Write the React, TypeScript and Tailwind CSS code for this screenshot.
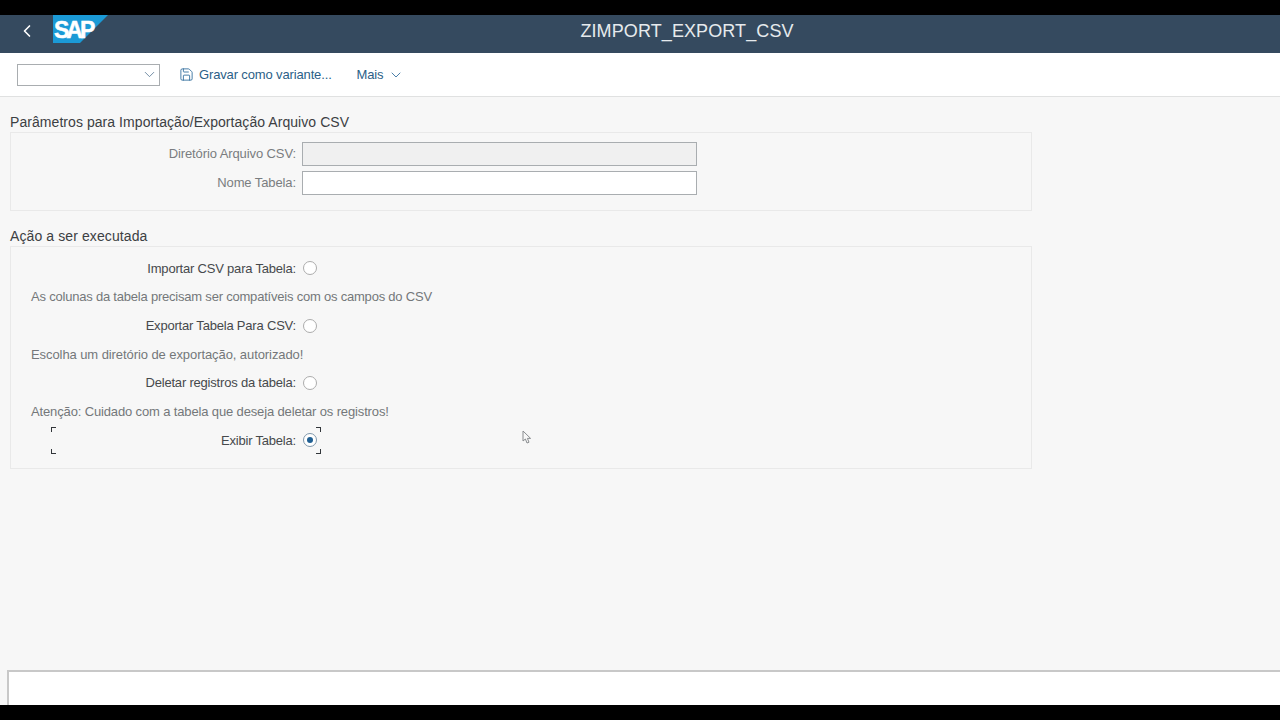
import React from 'react';
import { ChevronDown, ChevronLeft, Save } from 'lucide-react';

const font = { fontFamily: '"Liberation Sans", Arial, sans-serif' };

const RadioRow: React.FC<{ label: string; checked?: boolean }> = ({ label, checked }) => (
    <div className="flex items-center h-[28.67px]">
        <span className="w-[285px] text-right text-[13px] text-[#46494c] tracking-[-0.2px]">{label}</span>
        <span className={`ml-[7px] w-[14px] h-[14px] rounded-full border bg-white flex items-center justify-center ${checked ? 'border-[#7f97ab]' : 'border-[#acacac]'}`}>
            {checked && <span className="w-[6px] h-[6px] rounded-full bg-[#1f5f93]"></span>}
        </span>
    </div>
);

const Hint: React.FC<{ text: string; className: string }> = ({ text, className }) => (
    <div className={`h-[28.67px] flex items-center pl-[20px] text-[13px] text-[#74777a] ${className}`}>{text}</div>
);

const FieldRow: React.FC<{ label: string; disabled?: boolean }> = ({ label, disabled }) => (
    <div className="flex items-center h-[24px]">
        <span className="w-[285px] text-right text-[13px] text-[#7a7d80] tracking-[-0.1px]">{label}</span>
        <div className={`ml-[6px] w-[395px] h-[24px] border border-[#a9adb0] ${disabled ? 'bg-[#f0f0f0]' : 'bg-white'}`}></div>
    </div>
);

const App: React.FC = () => {
    return (
        <div className="w-[1280px] h-[720px] flex flex-col overflow-hidden bg-black relative" style={font}>
            <div className="h-[15px] bg-black shrink-0"></div>

            <header className="h-[38px] shrink-0 bg-[#354a5f] flex items-center pb-[7px]">
                <div className="w-[53px] flex items-center pl-[17px]">
                    <ChevronLeft size={20} strokeWidth={2} className="text-white" />
                </div>
                <div className="relative w-[55px] h-[28px] self-start">
                    <svg width="55" height="28" viewBox="0 0 55 28" className="block">
                        <polygon points="0,0 55,0 27,28 0,28" fill="#1b9ad6" />
                    </svg>
                    <span className="absolute left-[1px] top-[2px] text-[23px] leading-[26px] font-bold text-white tracking-[-3px] [-webkit-text-stroke:0.5px_white]">SAP</span>
                </div>
                <div className="flex-1 text-center pr-[14px] text-[18px] text-[#e6eaed] tracking-[0.1px] pt-[1px]">ZIMPORT_EXPORT_CSV</div>
            </header>

            <div className="h-[44px] shrink-0 bg-white border-b border-[#e0e1e1] flex items-center pl-[17px]">
                <div className="w-[143px] h-[22px] border border-[#a9adb0] bg-white flex items-center justify-end pr-[1px]">
                    <ChevronDown size={17} strokeWidth={1.1} className="text-[#4d6f8c]" />
                </div>
                <Save size={15} strokeWidth={1.4} className="ml-[19px] text-[#2f6c9c]" />
                <span className="ml-[5px] text-[13px] text-[#2b5f88] tracking-[-0.14px]">Gravar como variante...</span>
                <span className="ml-[25px] text-[13px] text-[#2b5f88] tracking-[-0.2px]">Mais</span>
                <ChevronDown size={16} strokeWidth={1.3} className="ml-[5px] text-[#2f6c9c]" />
            </div>

            <main className="flex-1 bg-[#f7f7f7] pl-[10px] pt-[15px] relative">
                <h2 className="h-[20px] text-[14px] leading-[21px] text-[#3c4043] tracking-[0.06px]">Parâmetros para Importação/Exportação Arquivo CSV</h2>
                <section className="w-[1022px] h-[79px] border border-[#e9e9e9] pt-[9px] flex flex-col gap-[5px]">
                    <FieldRow label="Diretório Arquivo CSV:" disabled />
                    <FieldRow label="Nome Tabela:" />
                </section>

                <h2 className="mt-[15px] h-[20px] text-[14px] leading-[21px] text-[#3c4043] tracking-[0.1px]">Ação a ser executada</h2>
                <section className="w-[1022px] h-[223px] border border-[#e9e9e9] pt-[7px]">
                    <RadioRow label="Importar CSV para Tabela:" />
                    <Hint text="As colunas da tabela precisam ser compatíveis com os campos do CSV" className="tracking-[-0.21px]" />
                    <RadioRow label="Exportar Tabela Para CSV:" />
                    <Hint text="Escolha um diretório de exportação, autorizado!" className="tracking-[-0.08px]" />
                    <RadioRow label="Deletar registros da tabela:" />
                    <Hint text="Atenção: Cuidado com a tabela que deseja deletar os registros!" className="tracking-[-0.14px]" />
                    <div className="relative">
                        <RadioRow label="Exibir Tabela:" checked />
                        {/* focus corners */}
                        <span className="absolute left-[40px] top-[1px] w-[5px] h-[5px] border-l border-t border-[#32363a]"></span>
                        <span className="absolute left-[40px] top-[23px] w-[5px] h-[5px] border-l border-b border-[#32363a]"></span>
                        <span className="absolute left-[305px] top-[1px] w-[5px] h-[5px] border-r border-t border-[#32363a]"></span>
                        <span className="absolute left-[305px] top-[23px] w-[5px] h-[5px] border-r border-b border-[#32363a]"></span>
                    </div>
                </section>

                {/* mouse pointer */}
                <svg width="10" height="15" viewBox="0 0 10 15" className="absolute left-[522px] top-[333px]">
                    <path d="M1 1 L1 11 L3.4 9 L5 13 L7 12.2 L5.4 8.4 L8.6 8.4 Z" fill="#f7f7f7" stroke="#8a8d90" strokeWidth="1" />
                </svg>
            </main>

            <div className="h-[35px] shrink-0 bg-[#f7f7f7] pl-[7px]">
                <div className="h-full bg-white border-l-2 border-t-2 border-[#c8c8c8]"></div>
            </div>
            <div className="h-[15px] bg-black shrink-0"></div>
        </div>
    );
};

export default App;
